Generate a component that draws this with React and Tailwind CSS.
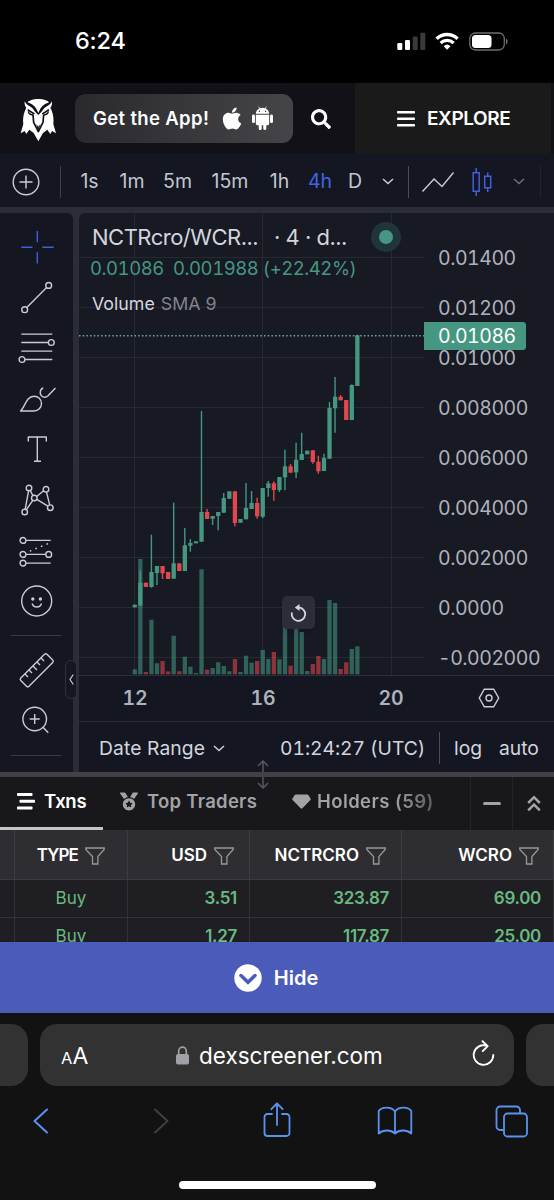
import { FaApple, FaSearch, FaMedal } from 'react-icons/fa';

const UP = '#459782';
const DOWN = '#e2464f';

// [direction, high, body top, body bottom, low, volume top]
const candles = [
  ['u', 604.7, 604.7, 607.3, 607.3, 669.3],
  ['u', 570.7, 582.7, 605.7, 605.7, 559],
  ['d', 582.7, 582.7, 587, 587, 672],
  ['u', 534.7, 572, 587, 587.7, 619.7],
  ['u', 566, 566, 573, 585, 663.3],
  ['d', 566, 566, 573.3, 579, 661],
  ['d', 572, 572, 579, 579, 671.3],
  ['u', 502.7, 563.3, 578.7, 578.7, 635.7],
  ['d', 563.3, 563.3, 571, 571, 671.3],
  ['u', 528, 545.3, 571, 571, 656.7],
  ['u', 539, 543, 545.7, 551.7, 666.7],
  ['u', 541.3, 541.3, 543.3, 543.3, 673],
  ['u', 411, 512, 541.7, 541.7, 569.3],
  ['d', 509, 512, 519, 519, 669.7],
  ['u', 516, 516, 518.7, 525, 668],
  ['u', 512, 512, 516, 530.3, 662.3],
  ['u', 493, 498, 512.7, 512.7, 666],
  ['u', 491.3, 491.3, 498.7, 498.7, 671.3],
  ['d', 491.3, 491.3, 523, 526.3, 659],
  ['u', 519, 519, 522.7, 522.7, 672],
  ['u', 483, 508, 519.3, 519.3, 655.7],
  ['u', 491, 503, 509, 509, 662.7],
  ['d', 497.7, 503, 516.3, 518.7, 661],
  ['u', 488, 488, 516.7, 518.3, 650],
  ['u', 481, 483.3, 488, 496.7, 659],
  ['d', 481.3, 483.3, 490, 500.7, 652],
  ['u', 477, 477, 490, 492, 659.3],
  ['u', 449.7, 466.3, 477.3, 490.3, 620],
  ['d', 464, 466.3, 472.7, 472.7, 665.7],
  ['u', 442.7, 459.7, 472.3, 478, 620],
  ['u', 432.7, 454, 460, 460, 632],
  ['u', 450.7, 450.7, 454.3, 454.3, 671],
  ['d', 450.3, 450.3, 462, 463.7, 664],
  ['d', 455.7, 461.7, 471.3, 473.7, 656],
  ['u', 453.7, 458, 471, 471, 659],
  ['u', 402, 408, 458.7, 458.7, 600],
  ['u', 377, 396.7, 408.3, 432.7, 603],
  ['d', 395, 396.7, 400.3, 400.3, 669],
  ['d', 400, 400, 420, 420, 662.3],
  ['u', 384.3, 385, 420, 420, 649],
  ['u', 335.3, 335.3, 386, 386, 646.3],
];

const prices = ['0.01400', '0.01200', '0.01000', '0.008000', '0.006000', '0.004000', '0.002000', '0.0000', '-0.002000'];

const rows = [
  { type: 'Buy', usd: '3.51', base: '323.87', quote: '69.00' },
  { type: 'Buy', usd: '1.27', base: '117.87', quote: '25.00' },
];

function Chevron({ className, stroke = '#c9ccd6' }) {
  return (
    <svg className={className} width="12" height="7" viewBox="0 0 12 7" fill="none" stroke={stroke} strokeWidth="1.5">
      <path d="M1 1l5 4.5L11 1" />
    </svg>
  );
}

function Funnel() {
  return (
    <svg width="20" height="18" viewBox="0 0 20 18" fill="none" stroke="#98989c" strokeWidth="1.3">
      <path d="M.8 1h18.400v1.500l-6.300 7V17H7.500V9.500L.8 2.500z" />
    </svg>
  );
}

function StatusBar() {
  return (
    <div className="h-[83px] bg-black flex items-center justify-between pl-[75px] pr-[46px] pb-[2px] text-white">
      <span className="text-[23.5px] font-medium tracking-[-0.2px]">6:24</span>
      <svg width="112" height="20" viewBox="396 31 112 20">
        <rect x="397.300" y="43" width="5" height="7" rx="1.300" fill="#fff" />
        <rect x="405" y="40" width="5" height="10" rx="1.300" fill="#fff" />
        <rect x="412.700" y="36.500" width="5" height="13.500" rx="1.300" fill="#3a3a3a" />
        <rect x="420.300" y="32.700" width="5" height="17.300" rx="1.300" fill="#3a3a3a" />
        <g fill="none" stroke="#fff">
          <path d="M436.600 38.700a15.200 15.200 0 0 1 21 0" strokeWidth="3.400" />
          <path d="M440.600 43a9.500 9.500 0 0 1 13 0" strokeWidth="3.200" />
        </g>
        <path d="M447.100 49.700l-3.400-3.500a5 5 0 0 1 6.800 0z" fill="#fff" />
        <rect x="469.800" y="33" width="34.500" height="17" rx="5.500" fill="none" stroke="#6f6f6f" strokeWidth="1.300" />
        <rect x="472" y="35" width="19.500" height="13" rx="3.500" fill="#fff" />
        <path d="M506 38.500c2.200 1 2.200 5 0 6z" fill="#6f6f6f" />
      </svg>
    </div>
  );
}

function Logo() {
  return (
    <svg className="ml-[20px] mt-[3px] shrink-0" width="37" height="44" viewBox="60 296 111 132" fill="#fff">
      <path d="M83 309c4-6 17-10 32-10s28 4 32 10c-12 5-23 11-28 24l-4 8-4-8c-5-13-16-19-28-24z" />
      <path d="M74 306c4 9 12 13 20 18 5 4 8 9 12 14l9 9 9-9c4-5 7-10 12-14 8-5 16-9 20-18 1 8-1 15-5 20 9 14 11 36 9 48l8 28-12-7-5 9-9-13-13 10-14 25-14-25-13-10-9 13-5-9-12 7 8-28c-2-12 0-34 9-48-4-5-6-12-5-20z" />
      <g fill="none" stroke="#111117" strokeWidth="5" strokeLinejoin="round">
        <path d="M83 331l20 13M147 331l-20 13" />
        <path d="M85 336c1 7 6 10 14 11M145 336c-1 7-6 10-14 11" strokeWidth="4" />
        <path d="M99 346l2 23 14 28 14-28 2-23" />
      </g>
      <path d="M108 374l7 8 7-8-7 20z" fill="#111117" />
    </svg>
  );
}

function Header() {
  return (
    <div className="h-[71px] bg-[#111117] flex items-center text-white font-semibold">
      <Logo />
      <div className="ml-[18px] w-[218px] h-[49px] rounded-[11px] bg-linear-to-r from-[#29292e] to-[#444449] flex items-center pl-[18px] shrink-0">
        <span className="text-[18.5px] whitespace-nowrap w-[128px] tracking-[0.35px]">Get the App!</span>
        <FaApple className="w-[22px] h-[25px]" />
        <svg className="ml-[9px]" width="21" height="25" viewBox="0 0 22 25" fill="#fff">
          <path d="M4 7.500C4.300 4.500 6 2.800 7.800 2L6.500.3l.5-.3 1.400 1.700a8 8 0 0 1 5.200 0L15 0l.5.3L14.200 2C16 2.800 17.700 4.500 18 7.500z" />
          <circle cx="7.800" cy="4.800" r=".8" fill="#39393e" />
          <circle cx="14.200" cy="4.800" r=".8" fill="#39393e" />
          <path d="M4 8.500h14V18a1.500 1.500 0 0 1-1.500 1.500H15V23a1.600 1.600 0 0 1-3.200 0v-3.500h-1.600V23A1.600 1.600 0 0 1 7 23v-3.500H5.500A1.500 1.500 0 0 1 4 18z" />
          <rect x="0" y="8.300" width="3.100" height="9" rx="1.500" />
          <rect x="18.900" y="8.300" width="3.100" height="9" rx="1.500" />
        </svg>
      </div>
      <FaSearch className="ml-[18px] w-5 h-5 shrink-0" />
      <div className="ml-[24px] w-[196px] h-full bg-[#1a1a1a] flex items-center pl-[42px] shrink-0">
        <svg width="18" height="16" viewBox="0 0 18 16" fill="#fff">
          <rect width="18" height="2.600" rx=".8" />
          <rect y="6.500" width="18" height="2.600" rx=".8" />
          <rect y="13" width="18" height="2.600" rx=".8" />
        </svg>
        <span className="ml-[12px] pt-[2px] text-[19px] tracking-[-0.38px]">EXPLORE</span>
      </div>
    </div>
  );
}

function ChartToolbar() {
  return (
    <div className="h-[53px] pt-[2px] bg-[#141722] flex items-center text-[19.5px] text-[#c3c6d0] *:shrink-0 *:flex *:justify-center">
      <div className="w-[52px]">
        <svg width="28" height="28" viewBox="0 0 28 28" fill="none" stroke="#c9ccd6" strokeWidth="1.4">
          <circle cx="14" cy="14" r="12.800" />
          <path d="M14 7.500v13M7.500 14h13" />
        </svg>
      </div>
      <div className="w-4"><i className="w-px h-8 bg-[#3e414d]" /></div>
      <div className="w-[43px]">1s</div>
      <div className="w-[42px]">1m</div>
      <div className="w-[49px]">5m</div>
      <div className="w-[56px]">15m</div>
      <div className="w-[43px]">1h</div>
      <div className="w-[38px] text-[#4463e0]">4h</div>
      <div className="w-8">D</div>
      <div className="w-[33px]"><Chevron /></div>
      <div className="w-[9px]"><i className="w-px h-8 bg-[#4a4d58]" /></div>
      <div className="w-[50px]">
        <svg width="34" height="22" viewBox="0 0 34 22" fill="none" stroke="#c9ccd6" strokeWidth="1.4">
          <path d="M1.500 20.500L13 8l8 7.500L32.500 1.500" />
        </svg>
      </div>
      <div className="w-[37px]">
        <svg width="20" height="28" viewBox="0 0 20 28" fill="none" stroke="#3f5fdc" strokeWidth="1.5">
          <path d="M1.200 4.800h6v18.400h-6zM4.200 0v4.800M4.200 23.200V28M12.700 8.300h6v11.400h-6zM15.700 4.500v3.800M15.700 19.700v4.300" />
        </svg>
      </div>
      <div className="w-[38px]"><Chevron stroke="#6d707b" /></div>
      <div className="w-1"><i className="w-px h-8 bg-[#20232e]" /></div>
    </div>
  );
}

function Tool({ children, className = 'h-[50.6px]', stroke = '#c9ccd6' }) {
  return (
    <div className={`flex items-center pl-[19px] ${className}`}>
      <svg className="overflow-visible" width="36" height="36" viewBox="0 0 36 36" fill="none" stroke={stroke} strokeWidth="1.4" strokeLinejoin="round">
        {children}
      </svg>
    </div>
  );
}

function DrawingTools() {
  return (
    <div className="w-[73px] h-[559px] bg-[#141722] rounded-tr-md pt-[8.7px] relative shrink-0">
      <Tool stroke="#3f5fdc">
        <path d="M18.300 2v11.300M18.300 23.300v11.300M2.300 18.300h11.200M23.300 18.300h11.400" />
      </Tool>
      <Tool>
        <circle cx="29.700" cy="5.400" r="2.900" />
        <circle cx="5.700" cy="29.700" r="2.900" />
        <path d="M7.800 27.600L27.600 7.500" />
      </Tool>
      <Tool>
        <path d="M2.300 4.100h31M2.300 12.500h27M2.300 21.100h31M6 29.500h27.300" />
        <circle cx="32.300" cy="12.500" r="2.900" />
        <circle cx="3" cy="29.500" r="2.900" />
      </Tool>
      <Tool>
        <path d="M1.500 30C6 26.500 7 15.200 15 15.200c4.200 0 7.500 3.200 7.500 7.300S19.200 30 15 30z" />
        <path d="M36.500 7l-7.700 7.900c-3 2.700-7.500.8-7.600-3.300 0-2.200 1.300-4 3-4.600" />
      </Tool>
      <Tool>
        <path d="M9.300 10.500V6h18v4.500M18.300 6v24.300M15 30.300h7" />
      </Tool>
      <Tool>
        <circle cx="10" cy="6" r="2.800" />
        <circle cx="27" cy="7.300" r="2.800" />
        <circle cx="15.300" cy="16" r="2.800" />
        <circle cx="5.700" cy="30" r="2.800" />
        <circle cx="31.300" cy="25.700" r="2.800" />
        <path d="M9.600 8.800L6.200 27.200M11.300 8.500l2.600 5.100M17.700 14.500l6.900-5.700M27.500 10.100l3.200 12.800M17.800 17.400l11.100 6.800M13.800 18.400l-6.500 9.300" />
      </Tool>
      <Tool>
        <circle cx="4" cy="7.400" r="2.900" />
        <circle cx="4" cy="21.400" r="2.900" />
        <circle cx="4" cy="30.100" r="2.900" />
        <circle cx="29.700" cy="21.400" r="2.900" />
        <path d="M7 7.400h24.700M7 21.400h19.800M7 30.100h24.700" />
        <path d="M11.500 17.800l17.500-7.200" strokeWidth="1.700" strokeLinecap="round" strokeDasharray="0.1 5.900" />
      </Tool>
      <Tool>
        <circle cx="17.700" cy="18" r="15" />
        <circle cx="13.800" cy="16" r="1" fill="#c9ccd6" />
        <circle cx="21.400" cy="16" r="1" fill="#c9ccd6" />
        <path d="M13.300 20.900c1.500 4.100 7.500 4.100 9 0" strokeLinecap="round" />
      </Tool>
      <hr className="mt-[9px] ml-[11px] w-[51px] border-[#363945]" />
      <Tool className="h-[50px] mt-[9px]">
        <path d="M25.500 2.300L1.800 26a1.800 1.800 0 0 0 0 2.500l5.700 5.700a1.800 1.800 0 0 0 2.500 0l23.700-23.700a1.800 1.800 0 0 0 0-2.500L28 2.300a1.800 1.800 0 0 0-2.500 0zM6 22l3 3M10 18l3 3M14 14l4 4M18 10l3 3M22 6l3 3" />
      </Tool>
      <Tool className="h-[50px]">
        <circle cx="15.700" cy="17" r="11.800" />
        <path d="M15.700 12v10M10.700 17h10M24 25.300l5.300 5.400" />
      </Tool>
      <hr className="mt-[10px] ml-[11px] w-[51px] border-[#363945]" />
      <div className="absolute z-10 left-[65px] top-[447px] w-3 h-[39px] rounded-md border border-[#2f323d] bg-[#141722] flex items-center justify-center">
        <svg width="5" height="11" viewBox="0 0 5 11" fill="none" stroke="#c9ccd6" strokeWidth="1.2">
          <path d="M4.300.5L1 5.500l3.300 5" />
        </svg>
      </div>
    </div>
  );
}

function Candles() {
  return (
    <svg className="shrink-0" width="345" height="462" viewBox="79 213 345 462">
      <g stroke="#262934">
        {prices.map((p, i) => (
          <path key={p} d={`M79 ${257.5 + i * 50}H424`} />
        ))}
        <path d="M134.500 213V675M262.500 213V675M391.500 213V675" />
      </g>
      {candles.map(([dir, high, top, bottom, low, vol], i) => {
        const x = 134.7 + i * 5.565;
        const fill = dir === 'u' ? UP : DOWN;
        return (
          <g key={i} fill={fill}>
            <rect x={x - 2.1} y={vol} width="4.300" height={674.3 - vol} opacity="0.58" />
            <rect x={x - 0.7} y={high} width="1.400" height={low - high} />
            <rect x={x - 2.1} y={top} width="4.300" height={bottom - top} />
          </g>
        );
      })}
      <path d="M79 335.700H424" stroke="#72a79d" strokeWidth="1.400" strokeDasharray="1.500 2.200" />
    </svg>
  );
}

function Chart() {
  return (
    <div className="w-[475px] h-[559px] bg-[#171923] rounded-tl-md overflow-hidden relative text-[#d3d5de] shrink-0">
      <div className="h-[462px] flex">
        <Candles />
        <div className="h-[462px] pt-[21px] pl-[14px] text-[19.5px] text-[#b0b2bb] tabular-nums tracking-[-0.48px]">
          {prices.map((p) => (
            <div key={p} className="h-[50px] flex items-center whitespace-nowrap">{p}</div>
          ))}
        </div>
      </div>

      <div className="absolute left-[345px] top-[109px] w-[102px] h-[28px] rounded-r-[3px] bg-[#459782] text-white text-[19.5px] tabular-nums tracking-[-0.48px] pl-[14px] pt-[2px] flex items-center">
        0.01086
      </div>

      {/* Legend */}
      <div className="absolute left-[13px] top-[9px] h-[30px] flex items-center text-[22px] tracking-[-0.5px] whitespace-nowrap">
        <span className="w-[182px]">NCTRcro/WCR...</span>
        <span>· 4 · d...</span>
      </div>
      <div className="absolute left-[292px] top-[9px] w-[30px] h-[30px] rounded-full bg-[#20343a] flex items-center justify-center">
        <i className="w-[14px] h-[14px] rounded-full bg-[#459782]" />
      </div>
      <div className="absolute left-[11px] top-[43px] h-[26px] flex items-center text-[18.5px] text-[#459782] tabular-nums tracking-[-0.45px] whitespace-nowrap">
        <span className="w-[83px]">0.01086</span>
        <span>0.001988 (+22.42%)</span>
      </div>
      <div className="absolute left-[13px] top-[78px] h-[26px] flex items-center gap-[6px] text-[17.8px]">
        Volume <span className="text-[#82848d]">SMA 9</span>
      </div>

      <div className="absolute left-[203px] top-[383px] w-[33px] h-[33px] rounded-[5px] bg-[#2b2d39] shadow-md flex items-center justify-center">
        <svg width="17" height="19" viewBox="0 0 17 19" fill="none" stroke="#d3d5de" strokeWidth="1.8">
          <path d="M2 9.500A6.700 6.700 0 1 0 8.700 4.500" />
          <path d="M9.500 1v7L4.800 4.500z" fill="#d3d5de" stroke="none" />
        </svg>
      </div>

      {/* Time scale */}
      <div className="h-[46px] bg-[#141722] border-t border-[#2b2e39] flex items-center text-[19.5px] font-semibold text-[#b0b2bb] tabular-nums">
        <span className="w-[112px] text-center">12</span>
        <span className="w-[144px] text-center">16</span>
        <span className="w-[112px] text-center">20</span>
        <svg className="ml-[31px] -mt-[2px]" width="22" height="20" viewBox="0 0 22 20" fill="none" stroke="#c9ccd6" strokeWidth="1.4">
          <path d="M6.300 1.200h9.400l5 8.800-5 8.800H6.300L1.300 10z" />
          <circle cx="11" cy="10" r="3" />
        </svg>
      </div>

      <div className="h-[51px] bg-[#141722] border-t border-[#2b2e39] flex items-center text-[19.3px] whitespace-nowrap pl-[20px] pt-[2px]">
        <span className="w-[114px] tracking-[0.1px]">Date Range</span>
        <Chevron />
        <span className="ml-[55px] w-[159px] tabular-nums tracking-[-0.05px]">01:24:27 (UTC)</span>
        <i className="w-px h-8 bg-[#4a4d58]" />
        <span className="ml-[14px] w-[45px]">log</span>
        <span>auto</span>
      </div>
    </div>
  );
}

function Tabs() {
  return (
    <div className="h-[53px] bg-[#18171c] flex items-center relative text-[18.5px] font-semibold text-[#a3a3a5] whitespace-nowrap">
      <div className="w-[103px] h-full border-b-3 border-[#c4c4c6] flex items-center pl-[17px] pb-px text-white shrink-0">
        <svg width="18" height="17" viewBox="0 0 18 17" fill="#fff">
          <rect width="15.500" height="3" rx=".7" />
          <rect x="2.500" y="6.800" width="15.500" height="3" rx=".7" />
          <rect y="13.500" width="15.500" height="3" rx=".7" />
        </svg>
        <span className="ml-[9px] tracking-[-0.3px]">Txns</span>
      </div>
      <FaMedal className="ml-[17px] -mt-1 w-[18px] h-[19px] shrink-0" />
      <span className="ml-[9px] w-[145px] -mt-1 shrink-0 tracking-[0.27px]">Top Traders</span>
      <svg className="-mt-1 shrink-0" width="19" height="15" viewBox="0 0 19 15" fill="#a3a3a5">
        <path d="M4 .5h11q.8 0 1.300.6L18.500 4.500q.4.800-.1 1.400l-8 8.400q-.9.800-1.800 0l-8-8.400q-.5-.6-.1-1.400L2.700 1.100Q3.200.5 4 .5z" />
      </svg>
      <span className="ml-[6px] w-[153px] -mt-1 shrink-0 tracking-[0.42px] bg-linear-to-r from-[#a3a3a5] from-50% to-[#58585b] to-78% bg-clip-text text-transparent">Holders (59)</span>
      <div className="w-[42px] h-full border-l border-[#242328] flex items-center justify-center shrink-0">
        <i className="w-[18px] h-[3.5px] rounded-sm bg-[#a3a3a5]" />
      </div>
      <div className="w-[42px] h-full border-l border-[#242328] flex items-center justify-center shrink-0">
        <svg width="14" height="17" viewBox="0 0 14 17" fill="none" stroke="#a3a3a5" strokeWidth="2.5">
          <path d="M1.200 8L7 2.200 12.800 8M1.200 15.300L7 9.500l5.800 5.800" />
        </svg>
      </div>

      {/* resize grip over the panel border */}
      <svg className="absolute left-[257px] -top-[17px]" width="12" height="29" viewBox="0 0 12 29" fill="none" stroke="#56575e" strokeWidth="1.5">
        <path d="M6 1v11M1 6l5-5 5 5M6 17v11M1 23l5 5 5-5" />
      </svg>
    </div>
  );
}

function Trades() {
  return (
    <div className="h-[112px] overflow-hidden bg-[#1f1e23] text-[#68ba81] text-[17px]">
      <div className="h-[50px] bg-[#2e2d32] border-b border-[#3b3a40] grid grid-cols-[15px_113px_122px_152px_152px] text-white font-semibold *:flex *:items-center *:pt-[2px] *:border-r *:border-[#3d3c42] *:gap-[7px] *:justify-end *:pr-[15px]">
        <div className="pr-0!" />
        <div className="pr-[22px]!"><span className="tracking-[-0.9px]">TYPE</span> <Funnel /></div>
        <div>USD <Funnel /></div>
        <div>NCTRCRO <Funnel /></div>
        <div className="pr-[14px]!">WCRO <Funnel /></div>
      </div>
      {rows.map((row) => (
        <div key={row.usd} className="h-[38px] border-b border-[#333238] grid grid-cols-[15px_113px_122px_152px_152px] font-semibold tracking-[-0.3px] *:flex *:items-center *:border-r *:border-[#333238] *:justify-end *:pr-[12px]">
          <div className="pr-0!" />
          <div className="font-normal justify-center! pr-0! tracking-[0.1px]">{row.type}</div>
          <div>{row.usd}</div>
          <div>{row.base}</div>
          <div>{row.quote}</div>
        </div>
      ))}
    </div>
  );
}

function Browser() {
  return (
    <div className="h-[187px] bg-[#121213] pt-[11px]">
      <div className="h-[62px] flex gap-3 text-white">
        <div className="w-7 bg-[#323232] rounded-r-[17px] shrink-0" />
        <div className="w-[474px] bg-[#323232] rounded-[17px] flex items-center pl-[21px] shrink-0">
          <span className="flex items-baseline w-[115px] pt-[2px]">
            <span className="text-[16.5px]">A</span>
            <span className="text-[23px]">A</span>
          </span>
          <svg width="13" height="19" viewBox="0 0 13 19" fill="none">
            <rect y="8" width="13" height="10.500" rx="2" fill="#a0a0a5" />
            <path d="M2.700 8.500V5a3.800 3.800 0 0 1 7.600 0v3.500" stroke="#a0a0a5" strokeWidth="1.700" />
          </svg>
          <span className="ml-[10px] w-[273px] pt-[2px] text-[22.5px]">dexscreener.com</span>
          <svg className="-mt-1" width="23" height="27" viewBox="0 0 23 27" fill="none" stroke="#fff" strokeWidth="1.900" strokeLinecap="round" strokeLinejoin="round">
            <path d="M14.500 5.700A9.800 9.800 0 1 0 21.300 15M10.500 1.200l5.200 4.900-5 5" />
          </svg>
        </div>
        <div className="w-7 bg-[#323232] rounded-l-[17px] shrink-0" />
      </div>

      <div className="h-[70px] flex items-center pl-[33px] *:shrink-0">
        <svg width="16" height="26" viewBox="0 0 16 26" fill="none" stroke="#5b92f0" strokeWidth="2" strokeLinecap="round" strokeLinejoin="round">
          <path d="M14 1.500L1.500 13 14 24.500" />
        </svg>
        <svg className="ml-[104px]" width="16" height="26" viewBox="0 0 16 26" fill="none" stroke="#3f3f41" strokeWidth="2" strokeLinecap="round" strokeLinejoin="round">
          <path d="M2 1.500L14.500 13 2 24.500" />
        </svg>
        <svg className="ml-[94px] -mt-[2px]" width="28" height="36" viewBox="0 0 28 36" fill="none" stroke="#5b92f0" strokeWidth="1.800" strokeLinecap="round" strokeLinejoin="round">
          <path d="M9 12H4.500A3 3 0 0 0 1.500 15v16a3 3 0 0 0 3 3h19a3 3 0 0 0 3-3V15a3 3 0 0 0-3-3H19M14 23V1.800M8.300 7.200L14 1.500l5.700 5.700" />
        </svg>
        <svg className="ml-[86px]" width="36" height="30" viewBox="0 0 36 30" fill="none" stroke="#5b92f0" strokeWidth="1.800" strokeLinejoin="round">
          <path d="M18 5.500C14.500.5 5 .5 1.700 5v22.500C6 23.500 14 23.500 18 27.500c4-4 12-4 16.300 0V5C31 .5 21.500.5 18 5.500zM18 5.500v22" />
        </svg>
        <svg className="ml-[82px] mt-px" width="34" height="34" viewBox="0 0 34 34" fill="none" stroke="#5b92f0" strokeWidth="1.800">
          <path d="M9 25H5a3.500 3.500 0 0 1-3.500-3.500V5A3.500 3.500 0 0 1 5 1.500h16.500A3.500 3.500 0 0 1 25 5v3.500" />
          <rect x="9" y="8.500" width="23" height="23" rx="3.500" />
        </svg>
      </div>

      <div className="mt-[25px] ml-[179px] w-[197px] h-2 rounded-full bg-white" />
    </div>
  );
}

export default function App() {
  return (
    <div className="w-[554px] h-[1200px] overflow-hidden bg-[#121213] font-[Inter,sans-serif]">
      <StatusBar />
      <Header />
      <ChartToolbar />
      <div className="pt-[6px] h-[565px] bg-[#2a2c37] flex gap-[6px]">
        <DrawingTools />
        <Chart />
      </div>
      <div className="h-[5px] bg-[#414146]" />
      <Tabs />
      <Trades />
      <div className="h-[71px] bg-[#4a5bba] flex items-center justify-center gap-[12px] pr-[2px] text-white text-[20px] font-semibold">
        <svg width="28" height="28" viewBox="0 0 28 28">
          <circle cx="14" cy="14" r="13.700" fill="#fff" />
          <path d="M7 11.500l7 6.800 7-6.800" fill="none" stroke="#4a5bba" strokeWidth="3.500" strokeLinecap="round" />
        </svg>
        Hide
      </div>
      <Browser />
    </div>
  );
}
